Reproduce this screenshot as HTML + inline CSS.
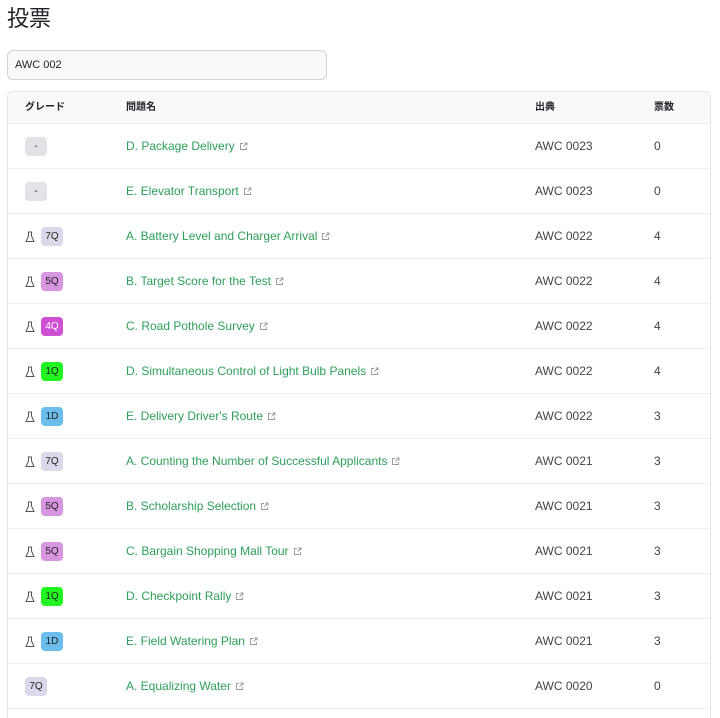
<!DOCTYPE html>
<html><head><meta charset="utf-8">
<style>
html,body{margin:0;width:720px;height:718px;overflow:hidden}
body{background:#fff;font-family:"Liberation Sans","Noto Sans CJK JP",sans-serif;color:#212529;position:relative}
h1{position:absolute;left:7px;top:4px;margin:0;font-size:22px;font-weight:400;line-height:30px}
.inp{position:absolute;left:7px;top:50px;border:1px solid #ced4da;border-radius:6px;background:#f8f9fa;font-size:11px;line-height:28px;padding-left:7px;box-sizing:border-box;width:320px;height:30px}
.tbl{position:absolute;left:7px;top:91px;width:704px;height:660px;border:1px solid #e3e6ea;border-radius:6px;box-sizing:border-box;overflow:hidden}
.hd{height:31px;background:#f8f9fa;font-size:10px;font-weight:bold;position:relative}
.row{height:45px;border-top:1px solid #eceef0;position:relative;font-size:12px;box-sizing:border-box}
.c{position:absolute;top:0;line-height:44px}
.hd .c{line-height:31px}
.c1{left:17px}.c2{left:118px}.c3{left:527px;color:#444}.c4{left:646px;color:#444}
.a{color:#2e9e5b}
.b{display:inline-block;width:22px;height:19px;border-radius:4px;font-size:10px;text-align:center;line-height:19px;vertical-align:middle;color:#222}
.f{display:inline-block;width:10px;vertical-align:middle;margin-right:6px}
.ext{display:inline-block;vertical-align:middle;margin-left:4px}
</style></head><body>
<h1>投票</h1>
<div class="inp">AWC 002</div>
<div class="tbl">
<div class="hd"><span class="c c1">グレード</span><span class="c c2">問題名</span><span class="c c3" style="color:#212529">出典</span><span class="c c4" style="color:#212529">票数</span></div>
<div id="r"></div>
</div>
<script>
const rows=[["-","#e2e3e7",0,"D. Package Delivery","AWC 0023",0],
["-","#e2e3e7",0,"E. Elevator Transport","AWC 0023",0],
["7Q","#dcd8ea",1,"A. Battery Level and Charger Arrival","AWC 0022",4],
["5Q","#d896e0",1,"B. Target Score for the Test","AWC 0022",4],
["4Q","#d050d4",1,"C. Road Pothole Survey","AWC 0022",4],
["1Q","#22f522",1,"D. Simultaneous Control of Light Bulb Panels","AWC 0022",4],
["1D","#6cbcec",1,"E. Delivery Driver's Route","AWC 0022",3],
["7Q","#dcd8ea",1,"A. Counting the Number of Successful Applicants","AWC 0021",3],
["5Q","#d896e0",1,"B. Scholarship Selection","AWC 0021",3],
["5Q","#d896e0",1,"C. Bargain Shopping Mall Tour","AWC 0021",3],
["1Q","#22f522",1,"D. Checkpoint Rally","AWC 0021",3],
["1D","#6cbcec",1,"E. Field Watering Plan","AWC 0021",3],
["7Q","#dcd8ea",0,"A. Equalizing Water","AWC 0020",0],
["","#fff",0,"","",""]];
const flask='<svg class="f" width="10" height="12" viewBox="0 0 10 12"><path d="M3 1h4M3.5 1v4L1 10.5h8L6.5 5V1" fill="none" stroke="#555" stroke-width="1"/></svg>';
const ext='<svg class="ext" width="9" height="9" viewBox="0 0 9 9"><path d="M4 1.5H1.5v6h6V5M5.5 1h2.5v2.5M8 1L4.5 4.5" fill="none" stroke="#999" stroke-width="0.9"/></svg>';
let h="";
for(const r of rows){
 const col=r[0]=="4Q"?"#fff":"#222";
 h+=`<div class="row"><span class="c c1">${r[2]?flask:""}${r[0]?`<span class="b" style="background:${r[1]};color:${col}">${r[0]}</span>`:""}</span><span class="c c2 a">${r[3]}${r[3]?ext:""}</span><span class="c c3">${r[4]}</span><span class="c c4">${r[5]}</span></div>`;
}
document.getElementById("r").outerHTML=h;
</script>
</body></html>
